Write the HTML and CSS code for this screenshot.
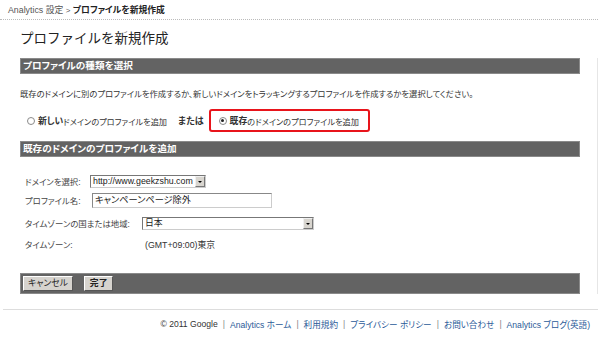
FILE: index.html
```html
<!DOCTYPE html>
<html lang="ja">
<head>
<meta charset="utf-8">
<link rel="stylesheet" href="styles.css">
</head>
<body>
<div class="crumb"><span class="crumb-a">Analytics 設定</span> <span class="gt">&gt;</span> <b>プロファイルを新規作成</b></div>
<div class="title">プロファイルを新規作成</div>
<div class="main">
  <div class="bar">プロファイルの種類を選択</div>
  <div class="desc">既存のドメインに別のプロファイルを作成するか、新しいドメインをトラッキングするプロファイルを作成するかを選択してください。</div>
  <div class="choice">
    <span class="opt"><span class="radio"></span><b>新しい</b>ドメインのプロファイルを追加</span>
    <b class="or">または</b>
    <span class="opt sel"><span class="radio on"></span><b>既存</b>のドメインのプロファイルを追加</span>
  </div>
  <div class="bar">既存のドメインのプロファイルを追加</div>
  <div class="form">
    <div class="row r1"><span class="lbl w1">ドメインを選択:</span><span class="select s1"><span class="val">http://www.geekzshu.com</span><span class="arrow"></span></span></div>
    <div class="row r2"><span class="lbl w2">プロファイル名:</span><span class="input">キャンペーンページ除外</span></div>
    <div class="row r3"><span class="lbl w3">タイムゾーンの国または地域:</span><span class="select s2"><span class="val">日本</span><span class="arrow"></span></span></div>
    <div class="row r4"><span class="lbl w3">タイムゾーン:</span><span class="tz">(GMT+09:00)東京</span></div>
  </div>
  <div class="btnbar"><span class="btn">キャンセル</span><span class="btn bold">完了</span></div>
</div>
<div class="sep"></div>
<div class="footer">
  <span>© 2011 Google</span><span class="pipe">|</span><a>Analytics ホーム</a><span class="pipe">|</span><a>利用規約</a><span class="pipe">|</span><a>プライバシー ポリシー</a><span class="pipe">|</span><a>お問い合わせ</a><span class="pipe">|</span><a>Analytics ブログ(英語)</a>
</div>
</body>
</html>
```
FILE: styles.css
```css
* { box-sizing: border-box; }
html, body { margin: 0; padding: 0; background: #fff; }
body {
  width: 600px; height: 350px; overflow: hidden;
  font-family: "Liberation Sans", "Noto Sans CJK JP", sans-serif;
  color: #333;
  font-size: 8.4px;
  font-feature-settings: "palt";
  white-space: nowrap;
}
.crumb {
  height: 20px; padding: 4px 0 0 8px; line-height: 12px;
  font-size: 8.8px; color: #555;
  border-bottom: 1px dotted #bbb;
  width: 598px;
}
.crumb b { color: #222; }
.gt { font-size: 8px; }
.title {
  padding-left: 20px; margin-top: 11px; height: 27px;
  font-size: 13.5px; line-height: 16px; color: #222;
  font-feature-settings: normal;
}
.main {
  width: 598px; padding: 0 17px 0 20px;
  border-right: 1px solid #e6e6e6;
}
.bar {
  height: 16px; background: #636363; border: 1px solid #8a8a8a;
  color: #fff; font-weight: bold; font-size: 9.6px; line-height: 14px;
  padding-left: 2px;
}
.desc { margin-top: 13px; height: 14px; line-height: 14px; font-size: 8.3px; color: #333; }
.choice {
  display: flex; align-items: center; margin-top: 8px; height: 23px;
  font-size: 8.2px;
}
.opt { display: flex; align-items: center; }
.opt:first-child { padding-left: 7px; }
.radio {
  width: 8px; height: 8px; border-radius: 50%; border: 1px solid #8a8a8a;
  background: #fff; margin-right: 3px; position: relative;
}
.radio.on::after {
  content: ""; position: absolute; left: 1.5px; top: 1.5px;
  width: 3px; height: 3px; border-radius: 50%; background: #222;
}
.opt b { font-size: 8.8px; }
.or { margin-left: 11px; font-size: 9px; }
.sel {
  margin-left: 5px; height: 23px; width: 161px;
  border: 2px solid #e8141b; border-radius: 3px;
  padding-left: 8px;
}
.choice + .bar { margin-top: 9px; }
.form { padding-left: 5px; padding-top: 17px; height: 116px; font-size: 8.4px; }
.row { display: flex; align-items: center; }
.r1 { height: 14px; }
.r2 { height: 16px; margin-top: 4px; }
.r3 { height: 14px; margin-top: 8px; }
.r4 { height: 14px; margin-top: 7px; }
.lbl { color: #444; }
.w1 { width: 65px; }
.w2 { width: 67px; }
.w3 { width: 117px; }
.select {
  display: flex; align-items: center; height: 13px;
  border: 1px solid #777; border-right-color: #ccc; border-bottom-color: #ccc;
  background: #fff; color: #222;
}
.s1 { width: 116px; }
.s2 { width: 172px; }
.val { flex: 1; padding-left: 2px; line-height: 11px; font-size: 8.8px; }
.arrow {
  width: 10px; height: 11px; background: #d8d5cf;
  border: 1px solid #f0f0f0; border-right-color: #777; border-bottom-color: #777;
  position: relative;
}
.arrow::after {
  content: ""; position: absolute; left: 2px; top: 4px;
  border-left: 2px solid transparent; border-right: 2px solid transparent; border-top: 2px solid #000;
}
.input {
  width: 180px; height: 15px; border: 1px solid #888;
  border-right-color: #ccc; border-bottom-color: #ccc;
  padding-left: 2px; line-height: 13px; color: #222; font-size: 9.2px;
}
.tz { padding-left: 3px; color: #333; font-size: 8.8px; }
.btnbar {
  height: 21px; background: #636363; border: 1px solid #8a8a8a;
  display: flex; align-items: center; gap: 11px; padding-left: 2px;
}
.btn {
  height: 15px; padding: 0 4px; background: #d6d3ce;
  border: 1px solid; border-color: #fff #555 #555 #fff;
  font-size: 8.8px; line-height: 13px; color: #222;
}
.btn.bold { font-weight: bold; padding: 0 5px; }
.sep { margin: 15px 0 0 3px; width: 595px; border-top: 1px solid #ddd; }
.footer {
  display: flex; justify-content: flex-end; align-items: center;
  padding-right: 10px; margin-top: 7px; height: 14px;
  font-size: 8.6px; color: #333;
}
.footer a { color: #2a5a98; }
.pipe { color: #888; margin: 0 5px; }
```
